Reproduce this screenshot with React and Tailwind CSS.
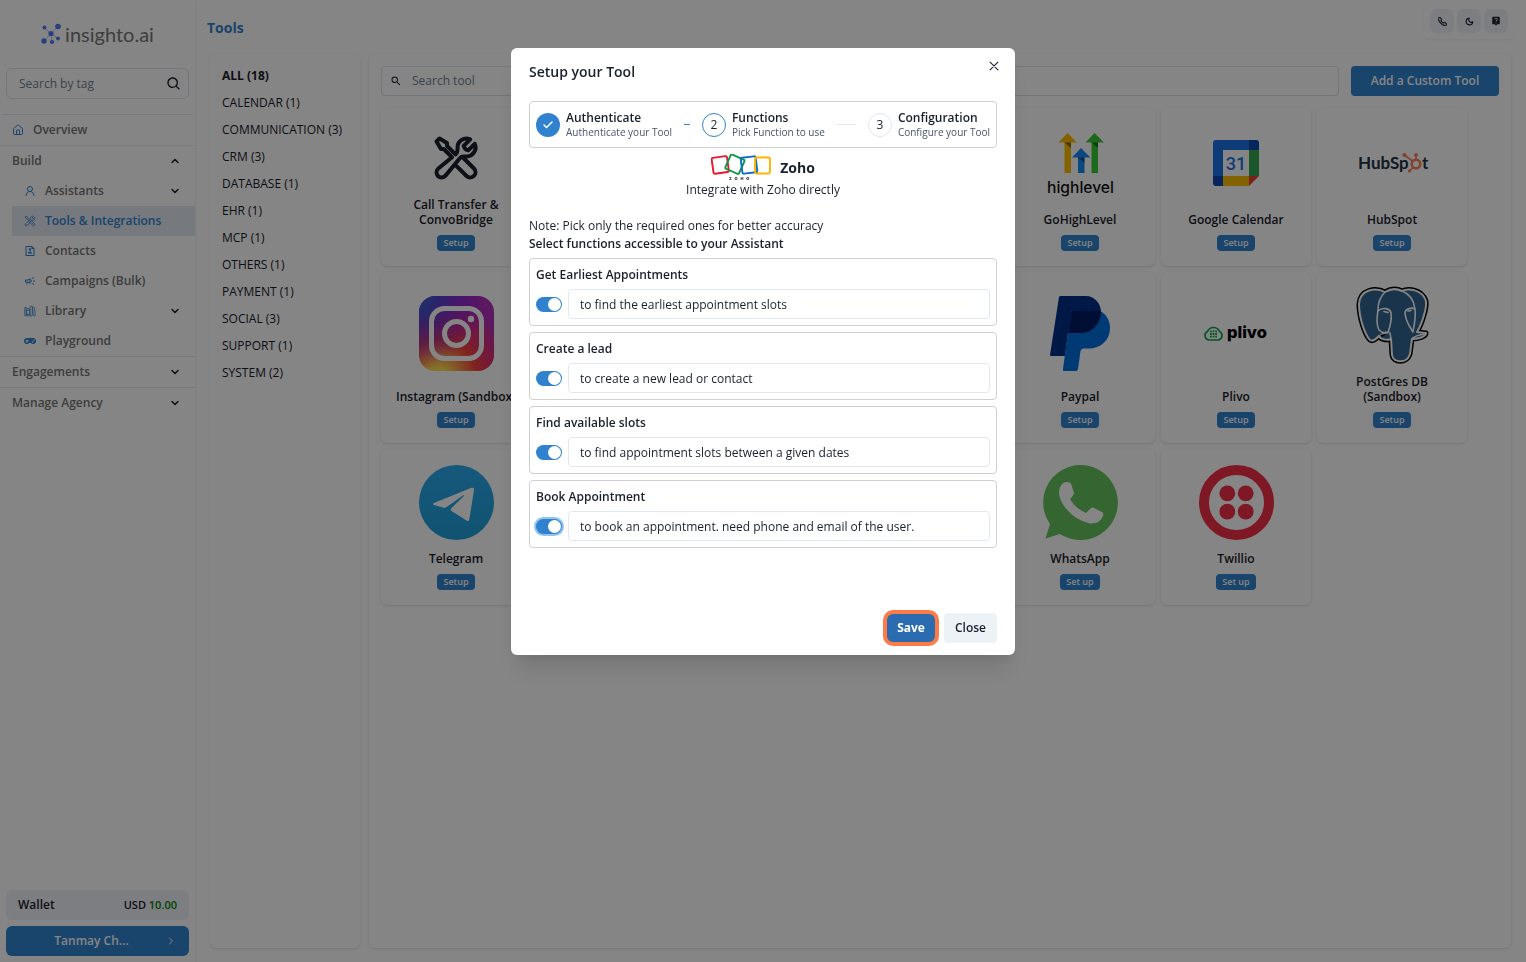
import { BiSearch } from "react-icons/bi";
import { BsTelephone } from "react-icons/bs";
import { FaGamepad } from "react-icons/fa";
import { FiCheck, FiChevronDown, FiChevronRight, FiChevronUp, FiMoon } from "react-icons/fi";
import { HiOutlineWrenchScrewdriver } from "react-icons/hi2";
import { IoCloseOutline, IoLibraryOutline } from "react-icons/io5";
import { LuHouse, LuUserRound } from "react-icons/lu";
import { MdLiveHelp, MdOutlineCampaign, MdSearch } from "react-icons/md";
import { RiFileUserLine } from "react-icons/ri";

const categories = [
  "ALL (18)",
  "CALENDAR (1)",
  "COMMUNICATION (3)",
  "CRM (3)",
  "DATABASE (1)",
  "EHR (1)",
  "MCP (1)",
  "OTHERS (1)",
  "PAYMENT (1)",
  "SOCIAL (3)",
  "SUPPORT (1)",
  "SYSTEM (2)",
];

const buildItems = [
  { name: "Assistants", icon: LuUserRound, expandable: true },
  { name: "Tools & Integrations", icon: HiOutlineWrenchScrewdriver, active: true },
  { name: "Contacts", icon: RiFileUserLine },
  { name: "Campaigns (Bulk)", icon: MdOutlineCampaign },
  { name: "Library", icon: IoLibraryOutline, expandable: true },
  { name: "Playground", icon: FaGamepad },
];

const steps = [
  { title: "Authenticate", description: "Authenticate your Tool", status: "complete" },
  { title: "Functions", description: "Pick Function to use", status: "active" },
  { title: "Configuration", description: "Configure your Tool", status: "incomplete" },
];

const functions = [
  { id: "earliest", name: "Get Earliest Appointments", prompt: "to find the earliest appointment slots" },
  { id: "lead", name: "Create a lead", prompt: "to create a new lead or contact" },
  { id: "slots", name: "Find available slots", prompt: "to find appointment slots between a given dates" },
  { id: "book", name: "Book Appointment", prompt: "to book an appointment. need phone and email of the user.", focused: true },
];

function InsightoLogo() {
  return (
    <div className="flex items-center justify-center gap-1">
      <svg width="20" height="22" viewBox="0 0 20 22" fill="#4a7df0" stroke="#4a7df0">
        <path d="M10 10.5 17 3.5M10 10.5 3.5 5M10 10.5 3 18M10 10.5 11 19M10 10.5 17 15.5" strokeWidth="0.5" />
        <g stroke="none">
          <circle cx="10" cy="10.5" r="2.6" />
          <circle cx="17" cy="3.5" r="2.8" />
          <circle cx="3.5" cy="4.5" r="1.9" />
          <circle cx="3" cy="18" r="2.7" />
          <circle cx="11" cy="19" r="2.1" />
          <circle cx="17" cy="15.5" r="1.9" />
        </g>
      </svg>
      <span className="font-[Lato] text-[20px] leading-6 text-[#777]">insighto.ai</span>
    </div>
  );
}

function CallTransferLogo() {
  return (
    <svg width="48" height="48" viewBox="0 0 24 24" fill="none" stroke="#1a202c" strokeWidth="2" strokeLinecap="round" strokeLinejoin="round">
      <path d="M11.42 15.17 17.25 21A2.652 2.652 0 0 0 21 17.25l-5.877-5.877M11.42 15.17l2.496-3.03c.317-.384.74-.626 1.208-.766M11.42 15.17l-4.655 5.653a2.548 2.548 0 1 1-3.586-3.586l6.837-5.63m5.108-.233c.55-.164 1.163-.188 1.743-.14a4.5 4.5 0 0 0 4.486-6.336l-3.276 3.277a3.004 3.004 0 0 1-2.25-2.25l3.276-3.276a4.5 4.5 0 0 0-6.336 4.486c.091 1.076-.071 2.264-.904 2.95l-.102.085m-1.745 1.437L5.909 7.5H4.5L2.25 3.75l1.5-1.5L7.5 4.5v1.409l4.26 4.26" />
    </svg>
  );
}

function HighLevelLogo() {
  return (
    <svg width="75" height="75" viewBox="0 0 75 75">
      <path d="M24.5 8 34 17.500h-6V48h-6.500V17.500h-6z" fill="#ffbc00" />
      <path d="M51.500 8 61 17.500h-6V48h-6.500V17.500h-6z" fill="#37ca37" />
      <path d="M38 23l9.500 9.500h-6V48H35V32.500h-6z" fill="#188bf6" />
      <path d="M21.500 17.500H28V23zM48.500 17.500H55V23zM35 32.500h6.500V38z" fill="#000" opacity=".45" />
      <text x="37.500" y="68" textAnchor="middle" fontFamily="Inter" fontSize="15.600" fontWeight="500" fill="#111">highlevel</text>
    </svg>
  );
}

function GoogleCalendarLogo() {
  return (
    <svg width="46" height="46" viewBox="0 0 46 46">
      <path d="M3 0h33v10H10v26H0V3a3 3 0 0 1 3-3z" fill="#1a73e8" />
      <path d="M36 0h7a3 3 0 0 1 3 3v7H36z" fill="#0d47b0" />
      <path d="M36 10h10v26H36z" fill="#34a853" />
      <path d="M10 36h26v10H10z" fill="#fbbc04" />
      <path d="M0 36h10v10H3a3 3 0 0 1-3-3z" fill="#0d47b0" />
      <path d="M36 36h10L36 46z" fill="#ea4335" />
      <path d="M10 10h26v26H10z" fill="#fff" />
      <text x="23" y="30" textAnchor="middle" fontFamily="Roboto" fontSize="18" fontWeight="500" fill="#1a73e8">31</text>
    </svg>
  );
}

function HubSpotLogo() {
  return (
    <svg width="75" height="24" viewBox="0 0 75 24">
      <g fontFamily="Lato" fontSize="17" fontWeight="700" fill="#213343">
        <text x="3" y="18">HubSp</text>
        <text x="67" y="18">t</text>
      </g>
      <g stroke="#ff7a59" fill="#ff7a59">
        <circle cx="61" cy="13" r="4.300" fill="none" strokeWidth="2.400" />
        <path d="M61 8V4M57.500 10 50 4.500M58 16.500l-3 3" strokeWidth="1.700" />
        <circle cx="61" cy="4" r="1.400" />
        <circle cx="49.500" cy="4" r="1.600" />
        <circle cx="54.500" cy="20" r="1.200" />
      </g>
    </svg>
  );
}

function InstagramLogo() {
  return (
    <svg width="75" height="75" viewBox="0 0 75 75">
      <defs>
        <radialGradient id="ig-warm" cx="27%" cy="108%" r="100%">
          <stop offset="0" stopColor="#fd5" />
          <stop offset=".12" stopColor="#fd5" />
          <stop offset=".5" stopColor="#f5423c" />
          <stop offset=".75" stopColor="#d92d7a" />
          <stop offset="1" stopColor="#b02fb8" />
        </radialGradient>
        <radialGradient id="ig-cool" cx="-8%" cy="0%" r="95%">
          <stop offset="0" stopColor="#3771c8" />
          <stop offset=".3" stopColor="#3751d0" stopOpacity=".85" />
          <stop offset="1" stopColor="#60f" stopOpacity="0" />
        </radialGradient>
      </defs>
      <rect width="75" height="75" rx="16" fill="url(#ig-warm)" />
      <rect width="75" height="75" rx="16" fill="url(#ig-cool)" />
      <g fill="none" stroke="#fff" strokeWidth="5">
        <rect x="12.500" y="12.500" width="50" height="50" rx="13" />
        <circle cx="37.500" cy="37.500" r="12" />
      </g>
      <circle cx="52" cy="23" r="3.200" fill="#fff" />
    </svg>
  );
}

function PaypalLogo() {
  return (
    <svg width="60" height="75" viewBox="0 0 60 75">
      <path d="M9 1Q9 0 11 0H36C44 0 51 7 51 16C51 28 42 37 31 37H18L15 60H1Q0 60 0 59Z" fill="#002f86" />
      <path d="M21 15H50C56 18 60 24 60 32C60 44 51 52 40 52.500H33Q31 53 30.500 55L28 73Q27.500 75 26 75H14Q12.500 75 13 73Z" fill="#0070e0" />
      <path d="M21 17Q21 15 23 15H51C51 28 42 37 31 37H18Z" fill="#001c64" />
    </svg>
  );
}

function PlivoLogo() {
  return (
    <svg width="66" height="24" viewBox="0 0 66 24">
      <path d="M6 19A4.500 4.500 0 0 1 4.500 10.500A6.500 6.500 0 0 1 16.500 10.500A4.500 4.500 0 0 1 15 19Z" fill="none" stroke="#14a54a" strokeWidth="1.700" />
      <g fill="#14a54a">
        <path d="M7 9.500h1.800v1.800H7zM9.600 9.500h1.800v1.800H9.600zM12.200 9.500H14v1.800h-1.800zM7 12.100h1.800v1.800H7zM9.600 12.100h1.800v1.800H9.600zM12.200 12.100H14v1.800h-1.800zM7 14.700h1.800v1.800H7zM9.600 14.700h1.800v1.800H9.600zM12.200 14.700H14v1.800h-1.800z" />
      </g>
      <text x="24" y="17" fontFamily="Inter" fontSize="16.500" fontWeight="800" fill="#000">plivo</text>
    </svg>
  );
}

function PostgresLogo() {
  const head =
    "M29 4C20-1 4 1 3 16C3 30 9 47 14 52C17 54 20 51 23 48C24 51 30 53 35 51L36 67C37 75 51 76 54 66L56 51C62 51 70 49 70 45L61 44C66 36 71 20 70 13C66 1 52 0 46 3C40 0 34 1 29 4Z";
  return (
    <svg width="72" height="75" viewBox="0 0 72 75" strokeLinejoin="round" strokeLinecap="round" className="overflow-visible">
      <path d={head} stroke="#000" strokeWidth="5" />
      <path d={head} fill="#336791" stroke="#fff" strokeWidth="2" />
      <g fill="none" stroke="#fff" strokeWidth="1.600">
        <path d="M29 4C24 9 22 16 22 22C21 30 20 36 23 42C26 45 31 46 33 44" />
        <path d="M22 23C26 19 34 20 35 25C36 33 34 39 32 44" />
        <path d="M46 3C54 6 58 13 59 21C60 31 58 38 57 43" />
        <path d="M59 21C55 19 50 21 49 24C49 33 54 39 57 44" />
        <path d="M23 48 30 44M35 51 34 45M56 51C60 46 66 48 70 45" />
      </g>
      <path d="M28 23.500 32 24.500M52 23 55 22.500" stroke="#fff" strokeWidth="1.600" />
      <path d="M24 47 30 46 26 49Z" fill="#000" />
    </svg>
  );
}

function TelegramLogo() {
  return (
    <svg width="75" height="75" viewBox="0 0 75 75">
      <defs>
        <linearGradient id="tg" x1="0" y1="0" x2="0" y2="1">
          <stop offset="0" stopColor="#2aabee" />
          <stop offset="1" stopColor="#229ed9" />
        </linearGradient>
      </defs>
      <circle cx="37.500" cy="37.500" r="37.500" fill="url(#tg)" />
      <path d="M15 38 52.500 22.800Q55.500 22 55 25L50.300 54.500Q49.800 57 47.500 55.500L32.500 46Q31 44.700 32.500 43L45 31Q45.500 29.500 44 30.500L27.500 42Q26 43 24 42.400L15 40Q13 39 15 38Z" fill="#fff" />
    </svg>
  );
}

function WhatsAppLogo() {
  return (
    <svg width="75" height="75" viewBox="0 0 75 75">
      <path d="M37.500 0A37.500 37.500 0 1 1 17 69L2.500 73.500 7 59A37.500 37.500 0 0 1 37.500 0Z" fill="#67c15e" />
      <path d="M21 17.500Q26 16 28 18.500L31 28Q31 30 27 34Q32 43 43 48L48 43Q49 42 51 43L59 47Q61 48 60 51Q57 59 47 58.500Q31 55 21 41Q16 33 16 28Q16 21 21 17.500Z" fill="#fff" />
    </svg>
  );
}

function TwilioLogo() {
  return (
    <svg width="75" height="75" viewBox="0 0 75 75" fill="#f22f46">
      <circle cx="37.500" cy="37.500" r="32.500" fill="none" stroke="#f22f46" strokeWidth="10" />
      <circle cx="28.300" cy="28.300" r="7.900" />
      <circle cx="46.700" cy="28.300" r="7.900" />
      <circle cx="28.300" cy="46.700" r="7.900" />
      <circle cx="46.700" cy="46.700" r="7.900" />
    </svg>
  );
}

function ZohoLogo() {
  return (
    <svg width="60" height="27" viewBox="0 0 60 27" fill="none" strokeWidth="1.900">
      <rect x="1.500" y="3" width="15.500" height="16" rx="1.500" stroke="#f0142f" transform="rotate(-8 9 11)" />
      <rect x="16.500" y="2.500" width="15" height="15.500" rx="1.500" stroke="#089949" transform="rotate(24 24 10)" />
      <rect x="30.500" y="3" width="15" height="16" rx="1.500" stroke="#0f6fc0" transform="rotate(-7 38 11)" />
      <rect x="44" y="3.500" width="15" height="16" rx="1.500" stroke="#ffb400" />
      <text x="18" y="26" fontFamily="Inter" fontSize="4" fontWeight="700" fill="#000">
        Z&#160;&#160;&#160;O&#160;&#160;&#160;H&#160;&#160;&#160;O
      </text>
    </svg>
  );
}

const tools = [
  { name: "Call Transfer & ConvoBridge", logo: CallTransferLogo, compact: true },
  {},
  {},
  {},
  { name: "GoHighLevel", logo: HighLevelLogo },
  { name: "Google Calendar", logo: GoogleCalendarLogo },
  { name: "HubSpot", logo: HubSpotLogo },
  { name: "Instagram (Sandbox)", logo: InstagramLogo },
  {},
  {},
  {},
  { name: "Paypal", logo: PaypalLogo },
  { name: "Plivo", logo: PlivoLogo },
  { name: "PostGres DB (Sandbox)", logo: PostgresLogo },
  { name: "Telegram", logo: TelegramLogo },
  {},
  {},
  {},
  { name: "WhatsApp", logo: WhatsAppLogo, action: "Set up" },
  { name: "Twillio", logo: TwilioLogo, action: "Set up" },
];

function ToolCard({ name, logo: Logo, compact, action = "Setup" }) {
  if (!name) return <li className="rounded-md shadow-sm" />;
  return (
    <li className="flex flex-col items-center rounded-md px-3 pb-[15px] pt-4 shadow-sm">
      <div className="flex flex-1 items-center">
        <div className={compact ? "flex h-[62px] items-end pb-1" : "flex h-[75px] items-center"}>
          <Logo />
        </div>
      </div>
      <h3 className="mt-[11px] text-center text-xs font-semibold leading-[15px] text-[#1a202c]">{name}</h3>
      <button className="mt-2 h-4 rounded bg-[#3182ce] px-[6px] text-[9px] font-semibold leading-4 text-white">{action}</button>
    </li>
  );
}

function NavGroup({ name, open, children }) {
  const Chevron = open ? FiChevronUp : FiChevronDown;
  return (
    <div className="border-t border-[#e2e8f0]">
      <button className="flex h-[30px] w-full items-center justify-between pl-3 pr-[14px]">
        {name}
        <Chevron className="size-3 text-[#1a202c]" strokeWidth={3} />
      </button>
      {children}
    </div>
  );
}

function Sidebar() {
  return (
    <aside className="flex w-[195px] shrink-0 flex-col shadow-sm">
      <div className="flex h-[68px] items-center justify-center">
        <InsightoLogo />
      </div>
      <div className="mx-[6px] flex h-[31px] items-center rounded-md border border-[#dbe2ee] pl-3 pr-[6px]">
        <input aria-label="Search by tag" placeholder="Search by tag" className="min-w-0 flex-1 text-xs outline-none placeholder:text-[#718096]" />
        <BiSearch className="size-4 text-[#1a202c]" />
      </div>
      <nav className="mt-[15px] text-xs font-semibold text-[#757575]">
        <a href="#overview" className="mx-[2px] flex h-[31px] items-center gap-[9px] border-t border-[#e2e8f0] pl-[10px]">
          <LuHouse className="size-3 text-[#3182ce]" />
          Overview
        </a>
        <NavGroup name="Build" open>
          {buildItems.map(({ name, icon: Icon, active, expandable }) => (
            <a
              key={name}
              href="#build"
              className={
                active
                  ? "ml-3 flex h-[30px] items-center gap-[9px] bg-[#e2e8f0] pl-3 pr-[14px] text-[#3182ce]"
                  : "ml-3 flex h-[30px] items-center gap-[9px] pl-3 pr-[14px]"
              }
            >
              <Icon className="size-3 text-[#3182ce]" />
              <span className="flex-1">{name}</span>
              {expandable && <FiChevronDown className="size-3 text-[#1a202c]" strokeWidth={3} />}
            </a>
          ))}
        </NavGroup>
        <NavGroup name="Engagements" />
        <NavGroup name="Manage Agency" />
      </nav>
      <div className="mt-auto flex flex-col gap-[6px] p-[6px]">
        <div className="flex h-[30px] items-center justify-between rounded-md bg-[#edf2f7] px-3 font-semibold text-[#1a202c]">
          <span className="text-xs">Wallet</span>
          <span className="text-[11px]">
            USD <span className="text-[green]">10.00</span>
          </span>
        </div>
        <button className="flex h-[30px] items-center rounded-md bg-[#3182ce] px-3 text-xs font-semibold text-white">
          <span className="flex-1">Tanmay Ch...</span>
          <FiChevronRight className="size-3" />
        </button>
      </div>
    </aside>
  );
}

function HeaderActions() {
  return (
    <div className="flex h-[39px] items-center gap-[3px] rounded-md px-[6px] pt-[3px] text-[#1a202c] shadow-xs">
      <button aria-label="Call" className="flex size-6 items-center justify-center rounded-md bg-[#edf2f7]">
        <BsTelephone className="size-[9px]" strokeWidth={1} />
      </button>
      <button aria-label="Dark mode" className="flex size-6 items-center justify-center rounded-md bg-[#edf2f7]">
        <FiMoon className="size-[9px]" strokeWidth={3} />
      </button>
      <button aria-label="Help" className="flex size-6 items-center justify-center rounded-md bg-[#edf2f7]">
        <MdLiveHelp className="size-[10px]" />
      </button>
    </div>
  );
}

function Step({ number, title, description, status }) {
  const last = status === "incomplete";
  return (
    <li className={last ? "flex items-center gap-[6px]" : "flex flex-1 items-center gap-[6px]"}>
      {status === "complete" && (
        <span className="flex size-6 shrink-0 items-center justify-center rounded-full bg-[#3182ce] text-white">
          <FiCheck className="size-3" strokeWidth={3} />
        </span>
      )}
      {status === "active" && (
        <span className="flex size-6 shrink-0 items-center justify-center rounded-full border border-[#3182ce] text-xs">{number}</span>
      )}
      {last && (
        <span className="flex size-6 shrink-0 items-center justify-center rounded-full border border-[#e2e8f0] text-xs">{number}</span>
      )}
      <div className="whitespace-nowrap">
        <h3 className="text-xs font-semibold leading-[15px]">{title}</h3>
        <p className="text-[10px] leading-[15px] text-[#4a5568]">{description}</p>
      </div>
      {!last && (
        <span className={status === "complete" ? "ml-[6px] mr-3 h-px flex-1 bg-[#3182ce]" : "ml-[6px] mr-3 h-px flex-1 bg-[#e2e8f0]"} />
      )}
    </li>
  );
}

function FunctionBox({ id, name, prompt, focused }) {
  return (
    <li className="rounded border border-[#d0d0d0] px-[6px] pb-[6px] pt-1">
      <label htmlFor={`${id}-switch`} className="block text-xs font-semibold leading-6">
        {name}
      </label>
      <div className="mt-[2px] flex items-center gap-[6px]">
        <input
          id={`${id}-switch`}
          type="checkbox"
          defaultChecked
          className={
            focused
              ? "flex h-[15px] w-[26px] shrink-0 appearance-none items-center rounded-full bg-[#cbd5e0] p-px ring-2 ring-[#90c3f0] before:size-[13px] before:rounded-full before:bg-white checked:justify-end checked:bg-[#3182ce]"
              : "flex h-[15px] w-[26px] shrink-0 appearance-none items-center rounded-full bg-[#cbd5e0] p-px before:size-[13px] before:rounded-full before:bg-white checked:justify-end checked:bg-[#3182ce]"
          }
        />
        <input
          aria-label={`${name} prompt`}
          defaultValue={prompt}
          className="h-[30px] min-w-0 flex-1 rounded border border-[#e2e8f0] px-[11px] text-xs outline-none"
        />
      </div>
    </li>
  );
}

function SetupModal() {
  return (
    <div className="fixed inset-0 flex items-start justify-center bg-black/48 pt-12">
      <section
        role="dialog"
        aria-labelledby="setup-title"
        className="w-full max-w-[504px] rounded-md bg-white text-[#1a202c] shadow-xl"
      >
        <header className="flex items-start justify-between pl-[18px] pr-3 pt-[9px]">
          <h2 id="setup-title" className="pt-[3px] text-sm font-semibold leading-6">
            Setup your Tool
          </h2>
          <button aria-label="Close dialog">
            <IoCloseOutline className="size-[18px]" />
          </button>
        </header>
        <div className="px-[18px] pt-[17px]">
          <ol className="flex h-[47px] items-center rounded border border-[#d0d0d0] px-[6px]">
            {steps.map((step, i) => (
              <Step key={step.title} number={i + 1} {...step} />
            ))}
          </ol>
          <div className="mt-[6px] flex h-[27px] items-center justify-center gap-[9px]">
            <ZohoLogo />
            <h3 className="text-sm font-bold">Zoho</h3>
          </div>
          <p className="text-center text-xs leading-[18px]">Integrate with Zoho directly</p>
          <p className="mt-[18px] text-xs leading-[18px]">Note: Pick only the required ones for better accuracy</p>
          <p className="text-xs font-semibold leading-[18px]">Select functions accessible to your Assistant</p>
          <ul className="mt-[5px] flex flex-col gap-[6px]">
            {functions.map((fn) => (
              <FunctionBox key={fn.id} {...fn} />
            ))}
          </ul>
        </div>
        <footer className="mt-[53px] flex items-center justify-end gap-[9px] px-[18px] py-3 text-xs">
          <button className="h-7 rounded-md bg-[#2b6cb0] px-[10px] font-bold text-white ring-4 ring-[#ff7a45]">Save</button>
          <button className="h-[30px] rounded bg-[#edf2f7] px-[11px] font-semibold">Close</button>
        </footer>
      </section>
    </div>
  );
}

export default function App() {
  return (
    <div className="flex min-h-screen bg-white font-['Open_Sans',sans-serif]">
      <Sidebar />
      <main className="flex min-w-0 flex-1 flex-col pb-[14px] pl-3 pr-3">
        <header className="flex h-[54px] items-start justify-between">
          <h1 className="pt-4 text-sm font-bold leading-6 text-[#3182ce]">Tools</h1>
          <HeaderActions />
        </header>
        <div className="flex flex-1 gap-[9px] pl-[3px] pr-[3px]">
          <ul className="w-[150px] shrink-0 rounded-md px-3 pt-2 text-xs leading-[27px] text-[#1a202c] shadow-sm">
            {categories.map((category, i) => (
              <li key={category} className={i === 0 ? "font-bold" : ""}>
                <button className="whitespace-nowrap">{category}</button>
              </li>
            ))}
          </ul>
          <section className="min-w-0 flex-1 rounded-md p-3 shadow-sm">
            <div className="flex gap-3">
              <div className="flex h-[30px] flex-1 items-center gap-[10px] rounded border border-[#dbe2ee] px-2">
                <MdSearch className="size-3 text-[#1a202c]" />
                <input aria-label="Search tool" placeholder="Search tool" className="min-w-0 flex-1 text-xs outline-none placeholder:text-[#718096]" />
              </div>
              <button className="h-[30px] w-[148px] rounded bg-[#3182ce] text-xs font-semibold text-white">Add a Custom Tool</button>
            </div>
            <ul className="mt-3 grid grid-cols-[repeat(auto-fill,150px)] gap-[6px]">
              {tools.map((tool, i) => (
                <ToolCard key={i} {...tool} />
              ))}
            </ul>
          </section>
        </div>
      </main>
      <SetupModal />
    </div>
  );
}
